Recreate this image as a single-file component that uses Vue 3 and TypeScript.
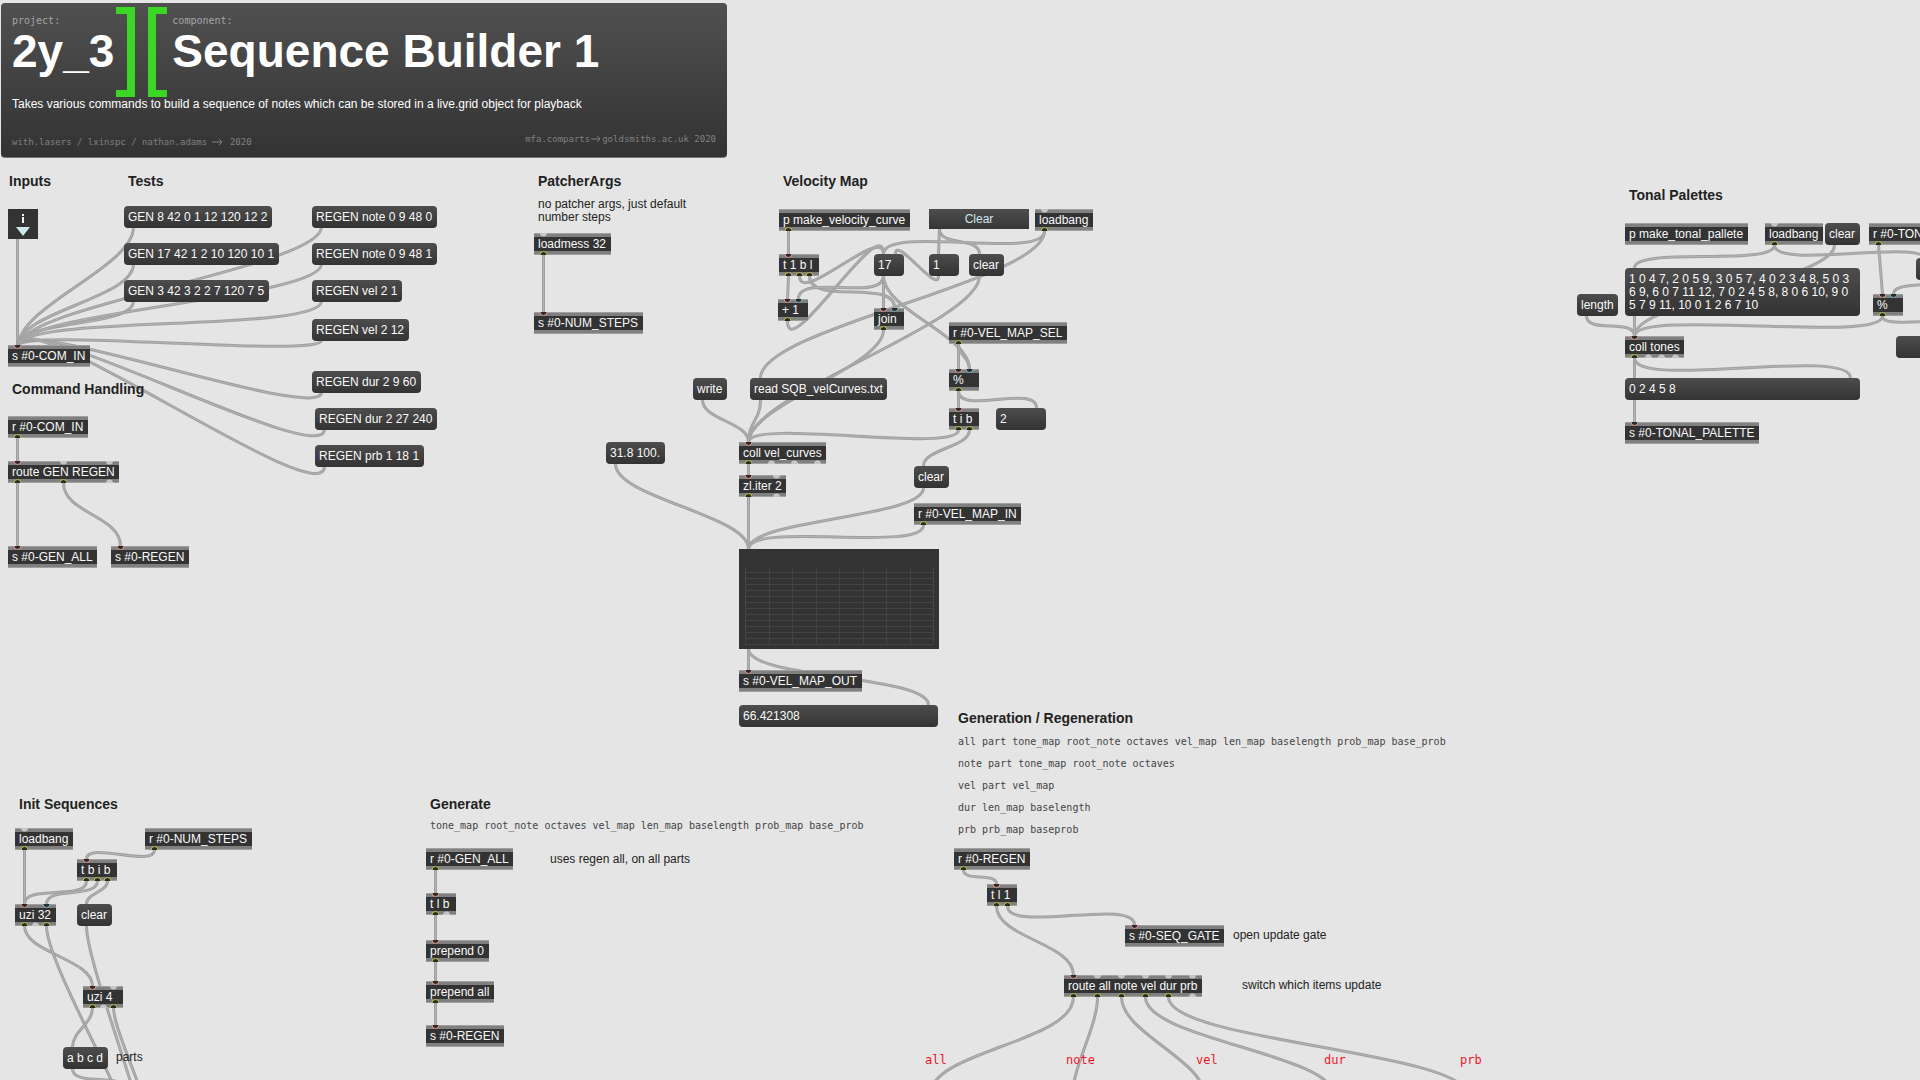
<script setup lang="ts">
type Kind = 'object' | 'message'
// Ports are [offset from the left edge, state]: h = hot inlet, c = cold inlet, o = outlet, n = not connected
type Port = [number, 'h' | 'c' | 'o' | 'n']

interface Node {
  x: number
  y: number
  w: number
  text: string
  kind: Kind
  ins: Port[]
  outs: Port[]
  tall?: boolean
}

interface Label {
  x: number
  y: number
  text: string
  style: 'heading' | 'comment' | 'mono' | 'tag'
}

const obj = (x: number, y: number, w: number, text: string, ins: Port[] = [], outs: Port[] = []): Node =>
  ({ x, y, w, text, kind: 'object', ins, outs })
const msg = (x: number, y: number, w: number, text: string, tall = false): Node =>
  ({ x, y, w, text, kind: 'message', ins: [], outs: [], tall })

const nodes: Node[] = [
  // inputs and tests
  obj(8, 345, 82, 's #0-COM_IN', [[9, 'h']]),
  msg(124, 206, 148, 'GEN 8 42 0 1 12 120 12 2'),
  msg(124, 243, 155, 'GEN 17 42 1 2 10 120 10 1'),
  msg(124, 280, 145, 'GEN 3 42 3 2 2 7 120 7 5'),
  msg(312, 206, 125, 'REGEN note 0 9 48 0'),
  msg(312, 243, 125, 'REGEN note 0 9 48 1'),
  msg(312, 280, 90, 'REGEN vel 2 1'),
  msg(312, 319, 97, 'REGEN vel 2 12'),
  msg(312, 371, 109, 'REGEN dur 2 9 60'),
  msg(315, 408, 122, 'REGEN dur 2 27 240'),
  msg(315, 445, 109, 'REGEN prb 1 18 1'),
  // command handling
  obj(8, 416, 80, 'r #0-COM_IN', [], [[9, 'o']]),
  obj(8, 461, 111, 'route GEN REGEN', [[9, 'h'], [55, 'n'], [101, 'n']], [[9, 'o'], [55, 'o'], [101, 'n']]),
  obj(8, 546, 89, 's #0-GEN_ALL', [[9, 'h']]),
  obj(111, 546, 78, 's #0-REGEN', [[9, 'h']]),
  // patcher args
  obj(534, 233, 77, 'loadmess 32', [[9, 'n']], [[9, 'o']]),
  obj(534, 312, 109, 's #0-NUM_STEPS', [[9, 'h']]),
  // velocity map
  obj(779, 209, 131, 'p make_velocity_curve', [], [[9, 'o']]),
  obj(1035, 209, 58, 'loadbang', [[9, 'n']], [[9, 'o']]),
  obj(779, 254, 40, 't 1 b l', [[9, 'h']], [[9, 'o'], [20, 'o'], [30, 'o']]),
  obj(778, 299, 30, '+ 1', [[9, 'h'], [20, 'c']], [[9, 'o']]),
  msg(874, 254, 30, '17'),
  msg(929, 254, 30, '1'),
  msg(969, 254, 35, 'clear'),
  obj(874, 308, 30, 'join', [[9, 'h'], [20, 'c']], [[9, 'o']]),
  obj(949, 322, 118, 'r #0-VEL_MAP_SEL', [], [[9, 'o']]),
  obj(949, 369, 30, '%', [[9, 'h'], [20, 'c']], [[9, 'o']]),
  obj(949, 408, 30, 't i b', [[9, 'h']], [[9, 'o'], [20, 'o']]),
  msg(996, 408, 50, '2'),
  msg(693, 378, 34, 'write'),
  msg(750, 378, 137, 'read SQB_velCurves.txt'),
  msg(606, 442, 59, '31.8 100.'),
  obj(739, 442, 87, 'coll vel_curves', [[9, 'h']], [[9, 'o'], [32, 'n'], [55, 'n'], [78, 'n']]),
  obj(739, 475, 47, 'zl.iter 2', [[9, 'h'], [37, 'n']], [[9, 'o'], [37, 'n']]),
  msg(914, 466, 35, 'clear'),
  obj(914, 503, 107, 'r #0-VEL_MAP_IN', [], [[9, 'o']]),
  obj(739, 670, 123, 's #0-VEL_MAP_OUT', [[9, 'h']]),
  msg(739, 705, 199, '66.421308'),
  // tonal palettes
  obj(1625, 223, 123, 'p make_tonal_pallete'),
  obj(1765, 223, 58, 'loadbang', [[9, 'n']], [[9, 'o']]),
  msg(1825, 223, 35, 'clear'),
  obj(1869, 223, 130, 'r #0-TON', [], [[9, 'o']]),
  msg(1916, 258, 60, ''),
  msg(1896, 336, 60, ''),
  msg(1577, 294, 41, 'length'),
  msg(1625, 268, 235, '1 0 4 7, 2 0 5 9, 3 0 5 7, 4 0 2 3 4 8, 5 0 3\n6 9, 6 0 7 11 12, 7 0 2 4 5 8, 8 0 6 10, 9 0\n5 7 9 11, 10 0 1 2 6 7 10', true),
  obj(1873, 294, 30, '%', [[9, 'h'], [20, 'c']], [[9, 'o']]),
  obj(1625, 336, 59, 'coll tones', [[9, 'h']], [[9, 'o'], [23, 'n'], [36, 'n'], [50, 'n']]),
  msg(1625, 378, 235, '0 2 4 5 8'),
  obj(1625, 422, 134, 's #0-TONAL_PALETTE', [[9, 'h']]),
  // init sequences
  obj(15, 828, 58, 'loadbang', [[9, 'n']], [[9, 'o']]),
  obj(145, 828, 107, 'r #0-NUM_STEPS', [], [[9, 'o']]),
  obj(77, 859, 40, 't b i b', [[9, 'h']], [[9, 'o'], [20, 'o'], [30, 'o']]),
  obj(15, 904, 41, 'uzi 32', [[9, 'h'], [31, 'c']], [[9, 'o'], [20, 'n'], [31, 'o']]),
  msg(77, 904, 35, 'clear'),
  obj(83, 986, 40, 'uzi 4', [[9, 'h'], [30, 'n']], [[9, 'o'], [20, 'n'], [30, 'o']]),
  msg(63, 1047, 45, 'a b c d'),
  // generate
  obj(426, 848, 87, 'r #0-GEN_ALL', [], [[9, 'o']]),
  obj(426, 893, 30, 't l b', [[9, 'h']], [[9, 'o'], [20, 'n']]),
  obj(426, 940, 63, 'prepend 0', [[9, 'h']], [[9, 'o']]),
  obj(426, 981, 68, 'prepend all', [[9, 'h']], [[9, 'o']]),
  obj(426, 1025, 78, 's #0-REGEN', [[9, 'h']]),
  // regeneration
  obj(954, 848, 76, 'r #0-REGEN', [], [[9, 'o']]),
  obj(987, 884, 30, 't l 1', [[9, 'h']], [[9, 'o'], [20, 'o']]),
  obj(1125, 925, 99, 's #0-SEQ_GATE', [[9, 'h']]),
  obj(1064, 975, 138, 'route all note vel dur prb',
    [[9, 'h'], [33, 'n'], [57, 'n'], [81, 'n'], [104, 'n'], [128, 'n']],
    [[9, 'o'], [33, 'o'], [57, 'o'], [81, 'o'], [104, 'o'], [128, 'n']]),
]

// Each cord: start x, start y, end x, end y, optional slack
const cords: number[][] = [
  [17, 239, 17, 346],
  [133, 227, 18, 346], [133, 264, 18, 346], [133, 301, 18, 346],
  [321, 227, 18, 346], [321, 264, 18, 346], [321, 301, 18, 346, 32], [321, 340, 18, 346],
  [321, 392, 18, 346, 32], [324, 429, 18, 346, 42], [324, 466, 18, 346, 50],
  [17, 438, 17, 461], [17, 483, 17, 546], [63, 483, 120, 546],
  [543, 255, 543, 312],
  [788, 231, 788, 254], [788, 276, 787, 299],
  [799, 276, 883, 254, 30], [809, 276, 894, 308, 30],
  [787, 321, 883, 254, 45], [883, 276, 798, 299, 26], [883, 276, 883, 308], [883, 276, 969, 369, 34],
  [939, 229, 938, 254], [939, 229, 979, 254, 18],
  [1044, 231, 883, 254, 30], [1044, 231, 760, 378, 50],
  [938, 276, 895, 254, 19], [979, 276, 748, 442, 47], [883, 330, 748, 442, 36],
  [958, 344, 958, 369], [958, 344, 969, 369, 12], [958, 391, 958, 408], [958, 391, 1036, 408, 24],
  [958, 430, 748, 442, 24], [969, 430, 923, 466, 17],
  [702, 400, 748, 442, 20], [760, 400, 748, 442, 20],
  [748, 464, 748, 475], [748, 497, 748, 549],
  [615, 464, 748, 549, 34], [923, 488, 748, 549, 30], [923, 525, 748, 549, 28],
  [748, 649, 748, 670], [748, 649, 928, 705, 30],
  [1774, 245, 1634, 268, 22], [1774, 245, 1928, 262, 26], [1834, 245, 1634, 336, 36],
  [1878, 245, 1882, 294], [1940, 276, 1893, 294, 14],
  [1882, 316, 1634, 336, 28], [1882, 316, 1940, 328, 14], [1586, 316, 1634, 336, 18],
  [1634, 316, 1634, 336], [1634, 358, 1634, 378], [1634, 358, 1850, 378, 32], [1634, 400, 1634, 422],
  [24, 850, 24, 904], [154, 850, 86, 859, 18], [86, 881, 24, 904, 20], [97, 881, 46, 904, 18],
  [107, 881, 86, 904, 11], [24, 926, 92, 986, 27], [86, 926, 150, 1162, 38], [46, 926, 140, 1160, 40],
  [92, 1008, 72, 1047, 16], [113, 1008, 155, 1140, 23], [72, 1069, 126, 1090, 18],
  [435, 870, 435, 893], [435, 915, 435, 940], [435, 962, 435, 981], [435, 1003, 435, 1025],
  [963, 870, 996, 884, 12], [1007, 906, 1134, 925, 28], [996, 906, 1073, 975, 32],
  [1073, 997, 929, 1096, 46], [1097, 997, 1072, 1096, 30], [1121, 997, 1204, 1096, 36],
  [1145, 997, 1334, 1096, 42], [1168, 997, 1468, 1096, 45],
]

// A cord hangs from its outlet and rises into its inlet; longer drops get more slack.
// The half pixel centres the odd stroke width on the ports.
const cordPath = ([x1, y1, x2, y2, slack]: number[]): string => {
  const a = x1 + 0.5
  const b = x2 + 0.5
  if (Math.abs(b - a) < 5) return `M${a} ${y1}L${b} ${y2}`
  const k = slack ?? Math.min(40, 18 + Math.abs(y2 - y1) * 0.2)
  return `M${a} ${y1}C${a} ${y1 + k} ${b} ${y2 - k} ${b} ${y2}`
}

const labels: Label[] = [
  { x: 9, y: 171, text: 'Inputs', style: 'heading' },
  { x: 128, y: 171, text: 'Tests', style: 'heading' },
  { x: 12, y: 379, text: 'Command Handling', style: 'heading' },
  { x: 538, y: 171, text: 'PatcherArgs', style: 'heading' },
  { x: 538, y: 198, text: 'no patcher args, just default\nnumber steps', style: 'comment' },
  { x: 783, y: 171, text: 'Velocity Map', style: 'heading' },
  { x: 1629, y: 185, text: 'Tonal Palettes', style: 'heading' },
  { x: 19, y: 794, text: 'Init Sequences', style: 'heading' },
  { x: 116, y: 1051, text: 'parts', style: 'comment' },
  { x: 430, y: 794, text: 'Generate', style: 'heading' },
  { x: 430, y: 815, text: 'tone_map root_note octaves vel_map len_map baselength prob_map base_prob', style: 'mono' },
  { x: 550, y: 853, text: 'uses regen all, on all parts', style: 'comment' },
  { x: 958, y: 708, text: 'Generation / Regeneration', style: 'heading' },
  {
    x: 958,
    y: 731,
    text: 'all part tone_map root_note octaves vel_map len_map baselength prob_map base_prob\nnote part tone_map root_note octaves\nvel part vel_map\ndur len_map baselength\nprb prb_map baseprob',
    style: 'mono',
  },
  { x: 1233, y: 929, text: 'open update gate', style: 'comment' },
  { x: 1242, y: 979, text: 'switch which items update', style: 'comment' },
  { x: 925, y: 1050, text: 'all', style: 'tag' },
  { x: 1066, y: 1050, text: 'note', style: 'tag' },
  { x: 1196, y: 1050, text: 'vel', style: 'tag' },
  { x: 1324, y: 1050, text: 'dur', style: 'tag' },
  { x: 1460, y: 1050, text: 'prb', style: 'tag' },
]

const gridCols = Array.from({ length: 9 }, (_, i) => 6 + Math.round(i * 23.5))
const gridRows = Array.from({ length: 13 }, (_, i) => 23 + i * 6)

const place = (n: { x: number; y: number }) => ({ left: `${n.x}px`, top: `${n.y}px` })
</script>

<template>
  <main class="patcher">
    <header class="banner">
      <div class="titles">
        <div class="title-block">
          <span class="kicker">project:</span>
          <span class="title">2y_3</span>
        </div>
        <span class="bracket close"></span>
        <span class="bracket open"></span>
        <div class="title-block">
          <span class="kicker">component:</span>
          <h1 class="title">Sequence Builder 1</h1>
        </div>
      </div>
      <p class="summary">Takes various commands to build a sequence of notes which can be stored in a live.grid object for playback</p>
      <footer class="credits">
        <span class="authors">with.lasers / lxinspc / nathan.adams
          <svg class="arrow" width="12" height="8"><path d="M0 4H10M7 1L10 4L7 7" /></svg>
          2020</span>
        <span>mfa.comparts<svg class="arrow" width="12" height="8"><path d="M1 4H10M7 1L10 4L7 7" /></svg>goldsmiths.ac.uk 2020</span>
      </footer>
    </header>

    <svg class="cords">
      <g v-for="(c, i) in cords" :key="i">
        <path class="cord-edge" :d="cordPath(c)" />
        <path class="cord-core" :d="cordPath(c)" />
      </g>
    </svg>

    <component
      :is="n.kind === 'message' ? 'button' : 'div'"
      v-for="(n, i) in nodes"
      :key="i"
      class="node"
      :class="[n.kind, { tall: n.tall }]"
      :style="{ ...place(n), width: `${n.w}px` }"
    >{{ n.text }}<svg v-if="n.ins.length || n.outs.length" class="ports" :width="n.w" height="22">
        <path v-for="(p, j) in n.ins" :key="'i' + j" :class="['port', p[1]]" :d="`M${p[0] - 3} 0A3 3 0 0 0 ${p[0] + 4} 0`" />
        <path v-for="(p, j) in n.outs" :key="'o' + j" :class="['port', p[1]]" :d="`M${p[0] - 3} 22A3 3 0 0 1 ${p[0] + 4} 22`" />
      </svg></component>

    <div class="inlet" :style="place({ x: 8, y: 209 })">
      <svg width="30" height="30">
        <rect x="14" y="5" width="2" height="2" fill="#f2f2f2" />
        <rect x="14" y="8" width="2" height="6" fill="#f2f2f2" />
        <path d="M8 18H22L15 27Z" fill="#cfe8ec" />
      </svg>
    </div>

    <button class="text-button" :style="place({ x: 929, y: 209 })">Clear</button>

    <svg class="plot" :style="place({ x: 739, y: 549 })" width="200" height="100">
      <path v-for="x in gridCols" :key="'c' + x" :d="`M${x}.5 19V95`" />
      <path v-for="y in gridRows" :key="'r' + y" :d="`M6 ${y}.5H194`" />
    </svg>

    <component
      :is="l.style === 'heading' ? 'h2' : 'p'"
      v-for="(l, i) in labels"
      :key="i"
      class="label"
      :class="l.style"
      :style="place(l)"
    >{{ l.text }}</component>
  </main>
</template>

<style>
body {
  margin: 0;
  background: #e5e5e5;
}
</style>

<style scoped>
.patcher {
  position: relative;
  width: 100%;
  min-height: 100vh;
  overflow: hidden;
  box-sizing: border-box;
  padding: 3px 1px;
  background: #e5e5e5;
  font-family: "Liberation Sans", Arial, sans-serif;
  font-size: 12px;
}

.banner {
  display: flex;
  flex-direction: column;
  box-sizing: border-box;
  width: 726px;
  max-width: 100%;
  height: 155px;
  padding: 4px 11px 8px;
  border-radius: 4px;
  border-bottom: 1px solid #777;
  background: linear-gradient(#505050, #333);
  color: #fff;
}

.titles {
  display: flex;
  height: 90px;
}

.title-block {
  display: flex;
  flex-direction: column;
  padding-top: 7px;
}

.kicker {
  font: 10px/14px "DejaVu Sans Mono", monospace;
  color: #a6a6a6;
}

.title {
  margin: 0;
  font-size: 46px;
  line-height: 46px;
  font-weight: 700;
  white-space: nowrap;
}

.bracket {
  box-sizing: border-box;
  width: 19px;
  border: solid #3cd626;
  border-width: 7px 8px;
}

.close {
  margin-left: 2px;
  border-left: 0;
}

.open {
  margin: 0 5px 0 13px;
  border-right: 0;
}

.summary {
  margin: 0;
  font-size: 12px;
  line-height: 14px;
  white-space: nowrap;
}

.credits {
  display: flex;
  justify-content: space-between;
  margin-top: auto;
  font: 9px/14px "DejaVu Sans Mono", monospace;
  color: #808080;
}

.authors {
  padding-top: 3px;
}

.arrow {
  vertical-align: -1px;
  fill: none;
  stroke: currentColor;
}

.cords {
  position: absolute;
  inset: 0;
  width: 100%;
  height: 100%;
  fill: none;
}

.cord-edge {
  stroke: #a0a0a0;
  stroke-width: 3px;
}

.cord-core {
  stroke: #b4b4b4;
  stroke-width: 1px;
}

.node {
  position: absolute;
  box-sizing: border-box;
  height: 22px;
  padding: 0 4px;
  border: 0;
  color: #fafafa;
  font: 12px/22px "Liberation Sans", Arial, sans-serif;
  text-align: left;
  white-space: pre;
}

.object {
  background: linear-gradient(#a0a0a0 1px, #808080 1px 4px, #333 4px 18px, #808080 18px 21px, #a0a0a0 21px);
}

.message {
  border-radius: 4px;
  background: linear-gradient(#4d4d4d, #333);
}

.tall {
  height: 48px;
  padding: 4px;
  line-height: 13px;
}

.ports {
  position: absolute;
  left: 0;
  top: 0;
}

.port {
  fill: #2b2b2b;
}

.h {
  stroke: #e59a8c;
}

.c {
  stroke: #74b4c6;
}

.o {
  stroke: #bcc23c;
}

.n {
  fill: #c6c6c6;
}

.inlet {
  position: absolute;
  width: 30px;
  height: 30px;
  background: #333;
}

.text-button {
  position: absolute;
  width: 100px;
  height: 20px;
  padding: 0;
  border: 0;
  background: linear-gradient(#4d4d4d, #363636);
  color: #cfe8ec;
  font: 12px/20px "Liberation Sans", Arial, sans-serif;
}

.plot {
  position: absolute;
  background: #333;
  stroke: #444;
}

.label {
  position: absolute;
  margin: 0;
  color: #222;
  white-space: pre;
}

.heading {
  font-size: 14px;
  line-height: 20px;
  font-weight: 700;
}

.comment {
  font-size: 12px;
  line-height: 13px;
}

.mono {
  color: #444;
  font: 10px/22px "DejaVu Sans Mono", monospace;
}

.tag {
  color: #f01428;
  font: 12px/20px "DejaVu Sans Mono", monospace;
}
</style>
